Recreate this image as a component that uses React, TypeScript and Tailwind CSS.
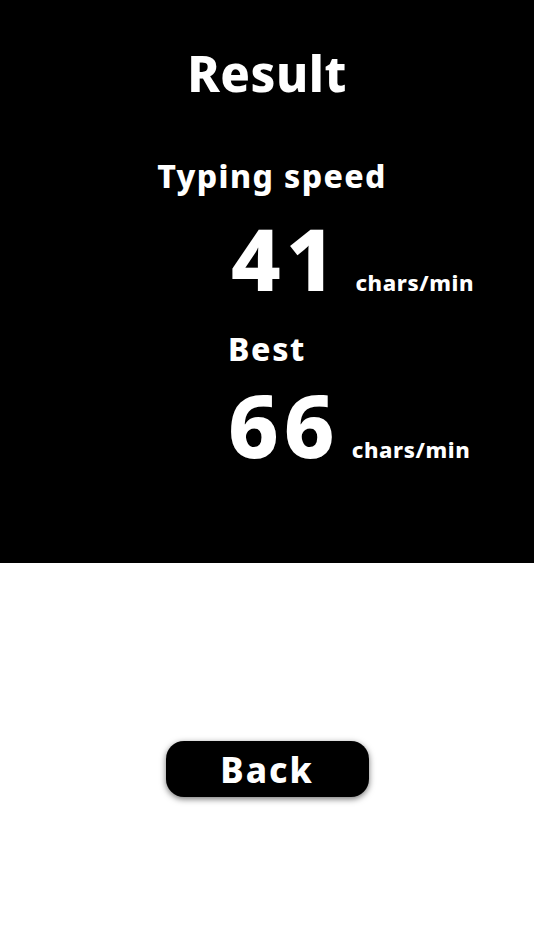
export default function App() {
  const font = { fontFamily: '"Noto Sans", "Open Sans", sans-serif' }
  return (
    <div className="w-[534px] h-[950px] bg-white flex flex-col" style={font}>
      {/* result panel */}
      <div className="h-[563px] bg-black text-white flex flex-col items-center">
        <h1 className="mt-[43px] text-[49px] leading-[60px] font-extrabold tracking-[0.5px]">Result</h1>
        <p className="mt-[53px] ml-[10px] text-[32px] leading-[40px] font-extrabold tracking-[1.4px]">Typing speed</p>
        <div className="self-stretch flex items-baseline pl-[231px] mt-[22px]">
          <span className="text-[86px] leading-[80px] font-extrabold tracking-[5px]">41</span>
          <span className="ml-[15px] text-[22px] font-extrabold tracking-[0.6px]">chars/min</span>
        </div>
        <p className="mt-[30px] text-[32px] leading-[40px] font-extrabold tracking-[1.6px]">Best</p>
        <div className="self-stretch flex items-baseline pl-[228px] mt-[15px]">
          <span className="text-[88px] leading-[80px] font-extrabold tracking-[5px]">66</span>
          <span className="ml-[12px] text-[22px] font-extrabold tracking-[0.6px]">chars/min</span>
        </div>
      </div>

      <div className="flex-1 flex justify-center pt-[178px]">
        <button className="w-[203px] h-[56px] bg-black text-white rounded-[18px] shadow-[0_2px_6px_rgba(0,0,0,0.55)] text-[35px] font-extrabold leading-none tracking-[2px]">
          Back
        </button>
      </div>
    </div>
  )
}
